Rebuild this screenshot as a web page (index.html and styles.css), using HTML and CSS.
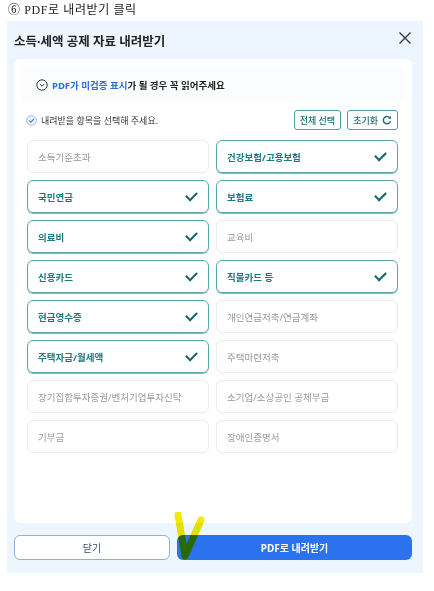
FILE: index.html
```html
<!DOCTYPE html>
<html lang="ko">
<head>
  <meta charset="UTF-8">
  <meta name="viewport" content="width=device-width, initial-scale=1.0">
  <title>PDF로 내려받기</title>
  <link rel="stylesheet" href="styles.css">
</head>
<body>
  <div class="caption">⑥ PDF로 내려받기 클릭</div>

  <div class="modal">
    <div class="modal-header">
      <h1 class="modal-title">소득·세액 공제 자료 내려받기</h1>
      <svg class="close-icon" width="14" height="14" viewBox="0 0 14 14">
        <path d="M1.5 1.5 L12.5 12.5 M12.5 1.5 L1.5 12.5" stroke="#333" stroke-width="1.3" fill="none"/>
      </svg>
    </div>

    <div class="modal-body">
      <div class="notice">
        <svg width="12" height="12" viewBox="0 0 12 12">
          <circle cx="6" cy="6" r="5.2" stroke="#333" stroke-width="1" fill="none"/>
          <path d="M3.8 5 L6 7.2 L8.2 5" stroke="#333" stroke-width="1" fill="none"/>
        </svg>
        <span><em>PDF가 미검증 표시</em>가 될 경우 꼭 읽어주세요</span>
      </div>

      <div class="select-bar">
        <div class="select-hint">
          <svg width="11" height="11" viewBox="0 0 12 12">
            <circle cx="6" cy="6" r="5.3" stroke="#8fb4ea" stroke-width="1" fill="#eef4fd"/>
            <path d="M3.4 6.1 L5.3 7.9 L8.7 4.2" stroke="#2a6fe0" stroke-width="1.1" fill="none"/>
          </svg>
          <span>내려받을 항목을 선택해 주세요.</span>
        </div>
        <div class="select-actions">
          <button class="btn-small">전체 선택</button>
          <button class="btn-small">초기화
            <svg width="10" height="10" viewBox="0 0 10 10">
              <path d="M8.2 3.6 A3.6 3.6 0 1 0 8.4 6.2" stroke="#1f6f73" stroke-width="1.5" fill="none"/>
              <path d="M6 3.6 L9 3.6 L9 0.7 Z" fill="#1f6f73"/>
            </svg>
          </button>
        </div>
      </div>

      <div class="items-grid">
        <div class="item">소득기준초과</div>
        <div class="item checked">건강보험/고용보험</div>
        <div class="item checked">국민연금</div>
        <div class="item checked">보험료</div>
        <div class="item checked">의료비</div>
        <div class="item">교육비</div>
        <div class="item checked">신용카드</div>
        <div class="item checked">직불카드 등</div>
        <div class="item checked">현금영수증</div>
        <div class="item">개인연금저축/연금계좌</div>
        <div class="item checked">주택자금/월세액</div>
        <div class="item">주택마련저축</div>
        <div class="item">장기집합투자증권/벤처기업투자신탁</div>
        <div class="item">소기업/소상공인 공제부금</div>
        <div class="item">기부금</div>
        <div class="item">장애인증명서</div>
      </div>
    </div>

    <div class="modal-footer">
      <button class="btn btn-close">닫기</button>
      <button class="btn btn-primary">PDF로 내려받기</button>
    </div>
  </div>

  <!-- highlighter mark -->
  <svg class="mark" width="40" height="52" viewBox="0 0 40 52">
    <path d="M5 3 L12 44 L28 8" stroke="#f2ea00" stroke-width="7" fill="none" stroke-linecap="round" stroke-linejoin="round"/>
  </svg>
</body>
</html>
```

FILE: styles.css
```css
* {
  margin: 0;
  padding: 0;
  box-sizing: border-box;
}

body {
  background-color: white;
  color: #333;
  font-family: 'Noto Sans', 'Noto Sans CJK KR', sans-serif;
  position: relative;
  width: 434px;
  height: 591px;
}

.caption {
  font-family: 'Liberation Serif', 'Noto Sans CJK KR', serif;
  font-size: 12px;
  letter-spacing: 0.6px;
  line-height: 20px;
  padding-left: 8px;
  color: #222;
}

.modal {
  margin-top: 1px;
  margin-left: 7px;
  width: 416px;
  height: 552px;
  background-color: #edf5fe;
  padding: 0 11px 0 7px;
  display: flex;
  flex-direction: column;
}

.modal-header {
  height: 38px;
  display: flex;
  align-items: center;
  justify-content: space-between;
}

.modal-title {
  font-size: 12.5px;
  font-weight: 700;
  color: #222;
}

.close-icon {
  margin-top: -4px;
}

.modal-body {
  background-color: white;
  border-radius: 6px;
  height: 464px;
  padding: 8px 14px 0 13px;
}

.notice {
  margin: 0 -6px 0 -5px;
  height: 35px;
  background-color: #fbfcfd;
  display: flex;
  align-items: center;
  gap: 4px;
  padding-left: 14px;
  font-size: 9.5px;
  font-weight: 700;
  color: #222;
}

.notice em {
  font-style: normal;
  color: #2a6fe0;
}

.select-bar {
  display: flex;
  align-items: center;
  justify-content: space-between;
  margin-top: 8px;
  height: 20px;
}

.select-hint {
  display: flex;
  align-items: center;
  gap: 4px;
  font-size: 9px;
  color: #333;
  margin-left: -1px;
}

.select-actions {
  display: flex;
  gap: 6px;
}

.btn-small {
  height: 20px;
  padding: 0 5px;
  border: 1px solid #4a9fa3;
  border-radius: 3px;
  background-color: white;
  color: #1f6f73;
  font-family: inherit;
  font-size: 9px;
  font-weight: 500;
  display: flex;
  align-items: center;
  gap: 4px;
}

.items-grid {
  display: grid;
  grid-template-columns: 182px 182px;
  gap: 7px;
  margin-top: 10px;
}

.item {
  height: 33px;
  border: 1px solid #ececec;
  border-radius: 6px;
  display: flex;
  align-items: center;
  padding-left: 10px;
  font-size: 9.5px;
  color: #999;
}

.item.checked {
  border-color: #56a9ab;
  box-shadow: 0 1px 0 #7fbcbd;
  color: #1d7a80;
  font-weight: 700;
  justify-content: space-between;
  padding-right: 11px;
}

.item.checked::after {
  content: "";
  width: 9px;
  height: 5px;
  border-left: 2px solid #17666b;
  border-bottom: 2px solid #17666b;
  transform: rotate(-45deg) translate(1px, -1px);
}

.modal-footer {
  display: flex;
  gap: 7px;
  margin-top: 12px;
}

.btn {
  height: 25px;
  border-radius: 6px;
  font-family: inherit;
  font-size: 10px;
  cursor: pointer;
}

.btn-close {
  width: 156px;
  background-color: white;
  border: 1px solid #8faee3;
  color: #3b4a63;
}

.btn-primary {
  flex: 1;
  background-color: #2b72ee;
  border: none;
  color: white;
  font-weight: 700;
}

.mark {
  position: absolute;
  left: 173px;
  top: 512px;
  mix-blend-mode: multiply;
}
```
